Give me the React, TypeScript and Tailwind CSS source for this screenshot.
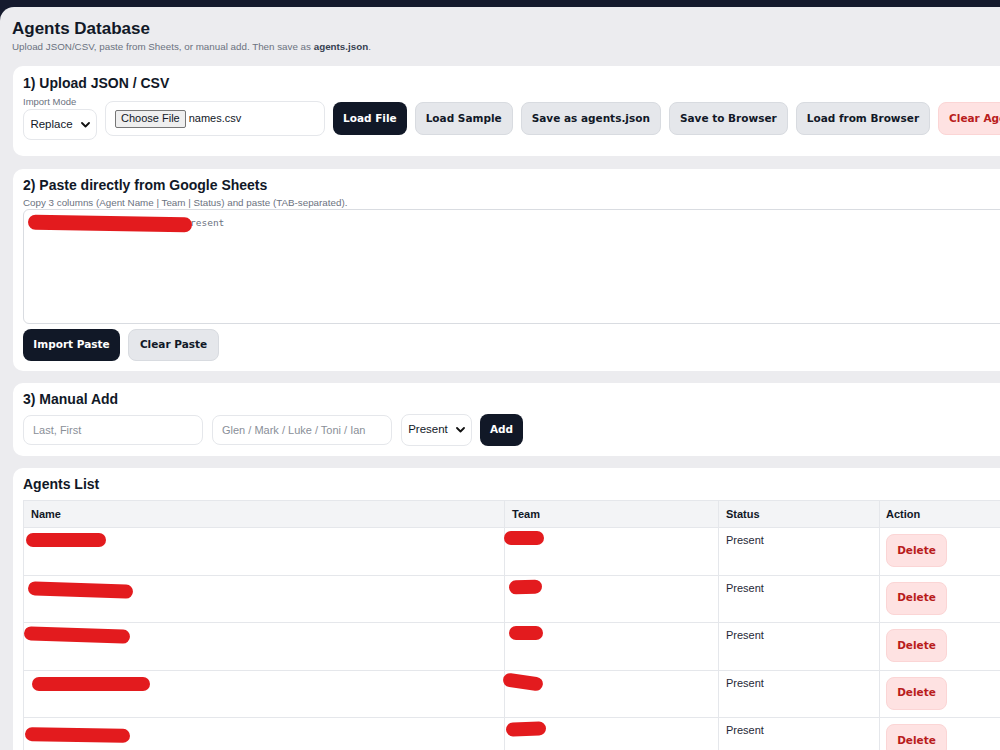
import React from "react";

const btnFont = "font-['DejaVu_Sans',Verdana,sans-serif] font-bold text-[10.5px]";

function Chevron() {
  return (
    <svg width="9" height="6" viewBox="0 0 9 6" className="ml-[8px]">
      <path d="M1 1 L4.5 4.5 L8 1" fill="none" stroke="#111" strokeWidth="1.8" strokeLinecap="round" strokeLinejoin="round" />
    </svg>
  );
}

function Scribble({ w, h = 14, rot = 0, ml = 0, mt = 0 }: { w: number; h?: number; rot?: number; ml?: number; mt?: number }) {
  return (
    <span
      className="block bg-[#e31b1e] rounded-full"
      style={{ width: w, height: h, transform: `rotate(${rot}deg)`, marginLeft: ml, marginTop: mt }}
    />
  );
}

const rows = [
  { nw: 80, nml: 1, nrot: 0, tw: 40, tml: -1, trot: 0, nmt: 0, tmt: -1 },
  { nw: 105, nml: 3, nrot: 2, tw: 33, tml: 4, trot: -2, nmt: 2, tmt: 0 },
  { nw: 106, nml: -1, nrot: 2, tw: 34, tml: 4, trot: 0, nmt: 0, tmt: -1 },
  { nw: 118, nml: 7, nrot: 0, tw: 40, tml: -2, trot: 8, nmt: 1, tmt: 0 },
  { nw: 105, nml: 0, nrot: 1, tw: 40, tml: 1, trot: -2, nmt: 5, tmt: 0 },
];

export default function App() {
  return (
    <div className="w-[1000px] h-[750px] overflow-hidden bg-[#151a2d] font-['Liberation_Sans',Arial,sans-serif] text-[#111827]">
      <div className="mt-[7px] w-[1100px] h-[743px] bg-[#ececef] rounded-tl-[14px] pl-[12px] pt-[12px]">
        <h1 className="text-[17px] font-bold leading-[20px]">Agents Database</h1>
        <p className="text-[9.8px] leading-[14px] text-[#6b7280] mt-[1px]">
          Upload JSON/CSV, paste from Sheets, or manual add. Then save as <b className="text-[#374151]">agents.json</b>.
        </p>

        <div className="mt-[12px] ml-[1px] flex flex-col">
          {/* Card 1 */}
          <div className="bg-white rounded-[10px] pl-[10px] pt-[10px] pb-[16px]">
            <h2 className="text-[14px] font-bold leading-[14px]">1) Upload JSON / CSV</h2>
            <div className="mt-[7px] flex items-center gap-[8px]">
              <div className="flex flex-col">
                <span className="text-[9.5px] leading-[10px] text-[#6b7280]">Import Mode</span>
                <div className="mt-[2px] w-[74px] h-[31px] border border-[#e5e7eb] rounded-[8px] flex items-center justify-center text-[11.5px]">
                  Replace
                  <Chevron />
                </div>
              </div>
              <div className="w-[220px] h-[35px] border border-[#e5e7eb] rounded-[8px] flex items-center pl-[9px]">
                <span className="h-[18px] px-[5px] flex items-center text-[11px] bg-[#efefef] border border-[#767676] rounded-[2px]">Choose File</span>
                <span className="ml-[3px] text-[11px]">names.csv</span>
              </div>
              <button className={`h-[33px] px-[10px] rounded-[8px] bg-[#111827] text-white ${btnFont}`}>Load File</button>
              <button className={`h-[33px] px-[10px] rounded-[8px] bg-[#e5e7eb] border border-[#d8dbe0] text-[#111827] ${btnFont}`}>Load Sample</button>
              <button className={`h-[33px] px-[10px] rounded-[8px] bg-[#e5e7eb] border border-[#d8dbe0] text-[#111827] ${btnFont}`}>Save as agents.json</button>
              <button className={`h-[33px] px-[10px] rounded-[8px] bg-[#e5e7eb] border border-[#d8dbe0] text-[#111827] ${btnFont}`}>Save to Browser</button>
              <button className={`h-[33px] px-[10px] rounded-[8px] bg-[#e5e7eb] border border-[#d8dbe0] text-[#111827] ${btnFont}`}>Load from Browser</button>
              <button className={`h-[33px] px-[10px] rounded-[8px] bg-[#fee2e2] border border-[#fbd5d5] text-[#b91c1c] ${btnFont}`}>Clear Agents</button>
            </div>
          </div>

          {/* Card 2 */}
          <div className="mt-[13px] bg-white rounded-[10px] pl-[10px] pt-[9px] pb-[10px]">
            <h2 className="text-[14px] font-bold leading-[14px]">2) Paste directly from Google Sheets</h2>
            <p className="mt-[5px] text-[9.8px] leading-[11px] text-[#6b7280]">Copy 3 columns (Agent Name | Team | Status) and paste (TAB-separated).</p>
            <div className="mt-[1px] h-[115px] border border-[#d9dce1] rounded-[6px] pl-[4px] pt-[6px]">
              <div className="flex items-center">
                <Scribble w={164} h={15} rot={1} />
                <span className="font-['DejaVu_Sans_Mono',monospace] text-[9.5px] text-[#6b7280] -ml-[2px]">resent</span>
              </div>
            </div>
            <div className="mt-[5px] flex gap-[8px]">
              <button className={`h-[32px] w-[97px] rounded-[8px] bg-[#111827] text-white ${btnFont}`}>Import Paste</button>
              <button className={`h-[32px] w-[91px] rounded-[8px] bg-[#e5e7eb] border border-[#d8dbe0] text-[#111827] ${btnFont}`}>Clear Paste</button>
            </div>
          </div>

          {/* Card 3 */}
          <div className="mt-[12px] bg-white rounded-[10px] pl-[10px] pt-[9px] pb-[10px]">
            <h2 className="text-[14px] font-bold leading-[14px]">3) Manual Add</h2>
            <div className="mt-[8px] flex items-center gap-[9px]">
              <div className="w-[180px] h-[30px] border border-[#e5e7eb] rounded-[8px] flex items-center pl-[9px] text-[11px] text-[#8a8f98]">Last, First</div>
              <div className="w-[180px] h-[30px] border border-[#e5e7eb] rounded-[8px] flex items-center pl-[9px] text-[11px] text-[#8a8f98]">Glen / Mark / Luke / Toni / Ian</div>
              <div className="w-[71px] h-[32px] border border-[#e5e7eb] rounded-[8px] flex items-center justify-center text-[11.5px]">
                Present
                <Chevron />
              </div>
              <button className={`-ml-[1px] h-[32px] w-[43px] rounded-[8px] bg-[#111827] text-white ${btnFont}`}>Add</button>
            </div>
          </div>

          {/* Card 4 */}
          <div className="mt-[12px] bg-white rounded-[10px] pl-[10px] pt-[9px] h-[400px]">
            <h2 className="text-[14px] font-bold leading-[14px]">Agents List</h2>
            <table className="mt-[9px] border-collapse border border-[#e5e7eb] text-[11px]">
              <thead>
                <tr className="bg-[#f3f4f6] h-[27px]">
                  <th className="w-[481px] text-left font-bold px-[7px] border border-[#e5e7eb]">Name</th>
                  <th className="w-[214px] text-left font-bold px-[7px] border border-[#e5e7eb]">Team</th>
                  <th className="w-[161px] text-left font-bold px-[7px] border border-[#e5e7eb]">Status</th>
                  <th className="w-[160px] text-left font-bold px-[6px] border border-[#e5e7eb]">Action</th>
                </tr>
              </thead>
              <tbody>
                {rows.map((r, i) => (
                  <tr key={i} className="h-[47.5px]">
                    <td className="align-top border border-[#e5e7eb] pt-[5px] pl-[1px]">
                      <Scribble w={r.nw} h={14} rot={r.nrot} ml={r.nml} mt={r.nmt} />
                    </td>
                    <td className="align-top border border-[#e5e7eb] pt-[4px]">
                      <Scribble w={r.tw} h={14} rot={r.trot} ml={r.tml} mt={r.tmt} />
                    </td>
                    <td className="align-top border border-[#e5e7eb] pt-[4px] px-[7px] text-[11px] text-[#1f2937]">Present</td>
                    <td className="align-top border border-[#e5e7eb] pt-[6px] px-[6px]">
                      <button className={`h-[33px] w-[61px] rounded-[8px] bg-[#fee2e2] border border-[#fbd5d5] text-[#b91c1c] ${btnFont}`}>Delete</button>
                    </td>
                  </tr>
                ))}
              </tbody>
            </table>
          </div>
        </div>
      </div>
    </div>
  );
}
